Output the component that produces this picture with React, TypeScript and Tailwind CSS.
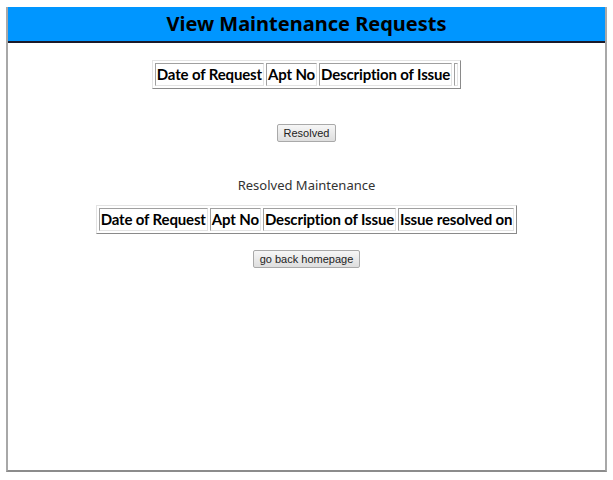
import React from 'react';

const font = { fontFamily: '"Noto Sans", "Liberation Sans", sans-serif' };

const Th: React.FC<{ children?: React.ReactNode }> = ({ children }) => (
  <th
    className="border border-t-[#a0a0a0] border-l-[#a0a0a0] border-r-[#e3e3e3] border-b-[#e3e3e3] px-[1px] py-[1px] text-[15px] tracking-[-0.15px] font-bold leading-[19px] text-black whitespace-nowrap"
    style={{ fontFamily: 'Lato, "Noto Sans", sans-serif' }}
  >
    {children}
  </th>
);

const Table: React.FC<{ cols: string[]; extra?: boolean }> = ({ cols, extra }) => (
  <table className="mx-auto border border-t-[#e3e3e3] border-l-[#e3e3e3] border-r-[#8a8a8a] border-b-[#8a8a8a] border-separate border-spacing-[2px]">
    <thead>
      <tr>
        {cols.map((c) => (
          <Th key={c}>{c}</Th>
        ))}
        {extra && <Th />}
      </tr>
    </thead>
  </table>
);

const Btn: React.FC<{ children: React.ReactNode }> = ({ children }) => (
  <button
    className="h-[18px] px-[6px] text-[11px] leading-[14px] text-[#222] bg-gradient-to-b from-[#f6f6f6] to-[#dedede] border border-[#a9a9a9] rounded-[2px]"
    style={{ fontFamily: '"Liberation Sans", Arial, sans-serif' }}
  >
    {children}
  </button>
);

export default function App() {
  return (
    <div className="w-[613px] h-[480px] bg-white pt-[7px] pl-[6px]" style={font}>
      <div className="w-[601px] h-[465px] border-2 border-t-0 border-[#8c8c8c] border-l-[#a8a8a8] border-r-[#a8a8a8]">
        <div className="h-[36px] bg-[#0096ff] border-b-2 border-[#1a1a2a] flex items-center justify-center">
          <h1 className="text-[20px] font-bold text-black leading-none">View Maintenance Requests</h1>
        </div>
        <div className="pt-[17px] flex flex-col items-center">
          <Table cols={['Date of Request', 'Apt No', 'Description of Issue']} extra />
          <div className="mt-[30px]">
            <Btn>Resolved</Btn>
          </div>
          <p className="mt-[33px] text-[13px] text-[#333] leading-[18px]">Resolved Maintenance</p>
          <div className="mt-[11px]">
            <Table cols={['Date of Request', 'Apt No', 'Description of Issue', 'Issue resolved on']} />
          </div>
          <div className="mt-[11px]">
            <Btn>go back homepage</Btn>
          </div>
        </div>
      </div>
    </div>
  );
}
